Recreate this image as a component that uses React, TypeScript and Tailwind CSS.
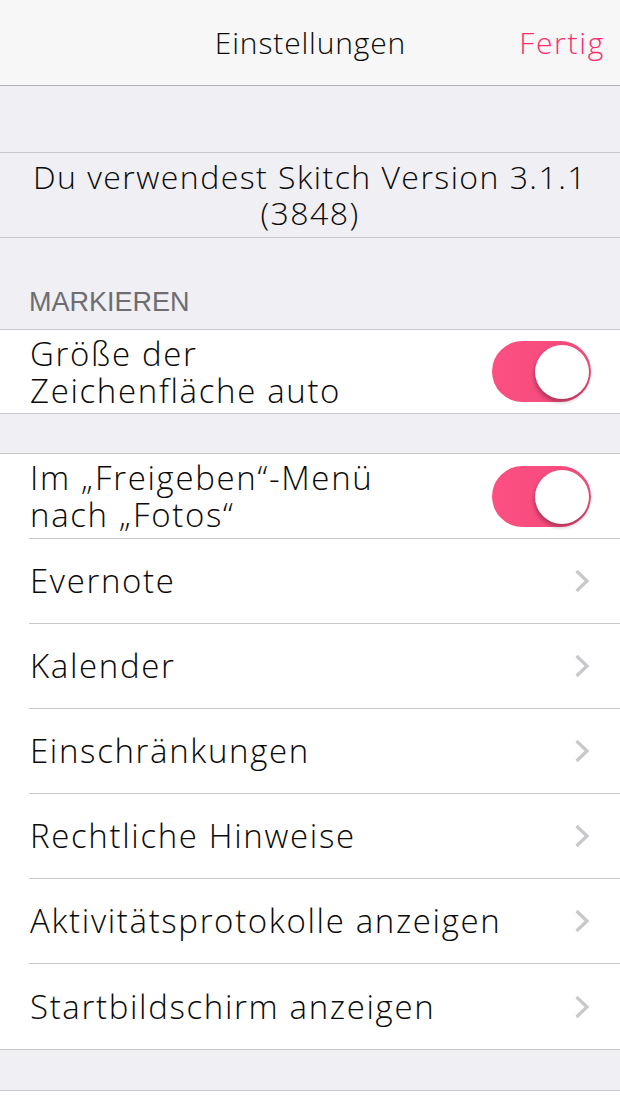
import React from "react";

const font = { fontFamily: '"Open Sans", "Noto Sans", sans-serif' };

function Toggle() {
  return (
    <div className="relative h-[61px] w-[99px] shrink-0 rounded-full bg-gradient-to-r from-[#fd4f82] to-[#f24a7a]">
      <div className="absolute right-[2px] top-[4px] h-[54px] w-[54px] rounded-full bg-white shadow-[-1px_3px_4px_rgba(0,0,0,0.3)]" />
    </div>
  );
}

function Chevron() {
  return (
    <svg width="16" height="24" viewBox="0 0 16 24" className="shrink-0">
      <path d="M2.5 2 L13 12 L2.5 22" fill="none" stroke="#c7c7cc" strokeWidth="3.2" />
    </svg>
  );
}

const links = [
  "Evernote",
  "Kalender",
  "Einschränkungen",
  "Rechtliche Hinweise",
  "Aktivitätsprotokolle anzeigen",
  "Startbildschirm anzeigen",
];

export default function App() {
  return (
    <div className="w-[620px] h-[1100px] overflow-hidden bg-[#efeff4] text-black font-light" style={font}>
      <div className="relative flex h-[86px] items-center justify-center border-b border-[#b2b2b2] bg-[#f7f7f7]">
        <span className="pl-[1px] text-[30px] tracking-[0.85px] text-[#0a0a0a]">Einstellungen</span>
        <span className="absolute right-[15px] text-[30px] tracking-[1.7px] text-[#ff2d6f]">Fertig</span>
      </div>
      <div className="h-[67px] border-b border-[#c8c7cc]" />
      <div className="flex h-[85px] flex-col items-center justify-center border-b border-[#c8c7cc] text-center text-[32px] leading-[36px] tracking-[1.45px] text-[#0a0a0a]">
        <div>Du verwendest Skitch Version 3.1.1</div>
        <div>(3848)</div>
      </div>
      <div className="flex h-[92px] items-end border-b border-[#c8c7cc] pb-[7px] pl-[29px]">
        <span className="text-[27px] font-normal text-[#6d6d72]" style={{ fontFamily: '"Liberation Sans", Arial, sans-serif' }}>MARKIEREN</span>
      </div>
      <div className="flex h-[84px] items-center justify-between border-b border-[#c8c7cc] bg-white pl-[30px] pr-[29px]">
        <div className="text-[33px] leading-[37px] tracking-[1.65px] text-[#0a0a0a]">
          <div>Größe der</div>
          <div>Zeichenfläche auto</div>
        </div>
        <Toggle />
      </div>
      <div className="h-[40px] border-b border-[#c8c7cc]" />
      <div className="border-b border-[#c8c7cc] bg-white">
        <div className="pl-[29px]">
          <div className="flex h-[85px] items-center justify-between border-b border-[#c8c7cc] pl-[1px] pr-[29px]">
            <div className="text-[33px] leading-[37px] tracking-[1.65px] text-[#0a0a0a]">
              <div>Im „Freigeben“-Menü</div>
              <div>nach „Fotos“</div>
            </div>
            <Toggle />
          </div>
        </div>
        {links.map((l, i) => (
          <div key={l} className="pl-[29px]">
            <div className={`flex h-[85px] items-center justify-between pr-[30px] ${i < links.length - 1 ? "border-b border-[#c8c7cc]" : ""}`}>
              <span className="pl-[1px] text-[33px] tracking-[1.65px] text-[#0a0a0a]">{l}</span>
              <Chevron />
            </div>
          </div>
        ))}
      </div>
      <div className="h-[41px] border-b border-[#c8c7cc]" />
      <div className="h-[20px] bg-white" />
    </div>
  );
}
